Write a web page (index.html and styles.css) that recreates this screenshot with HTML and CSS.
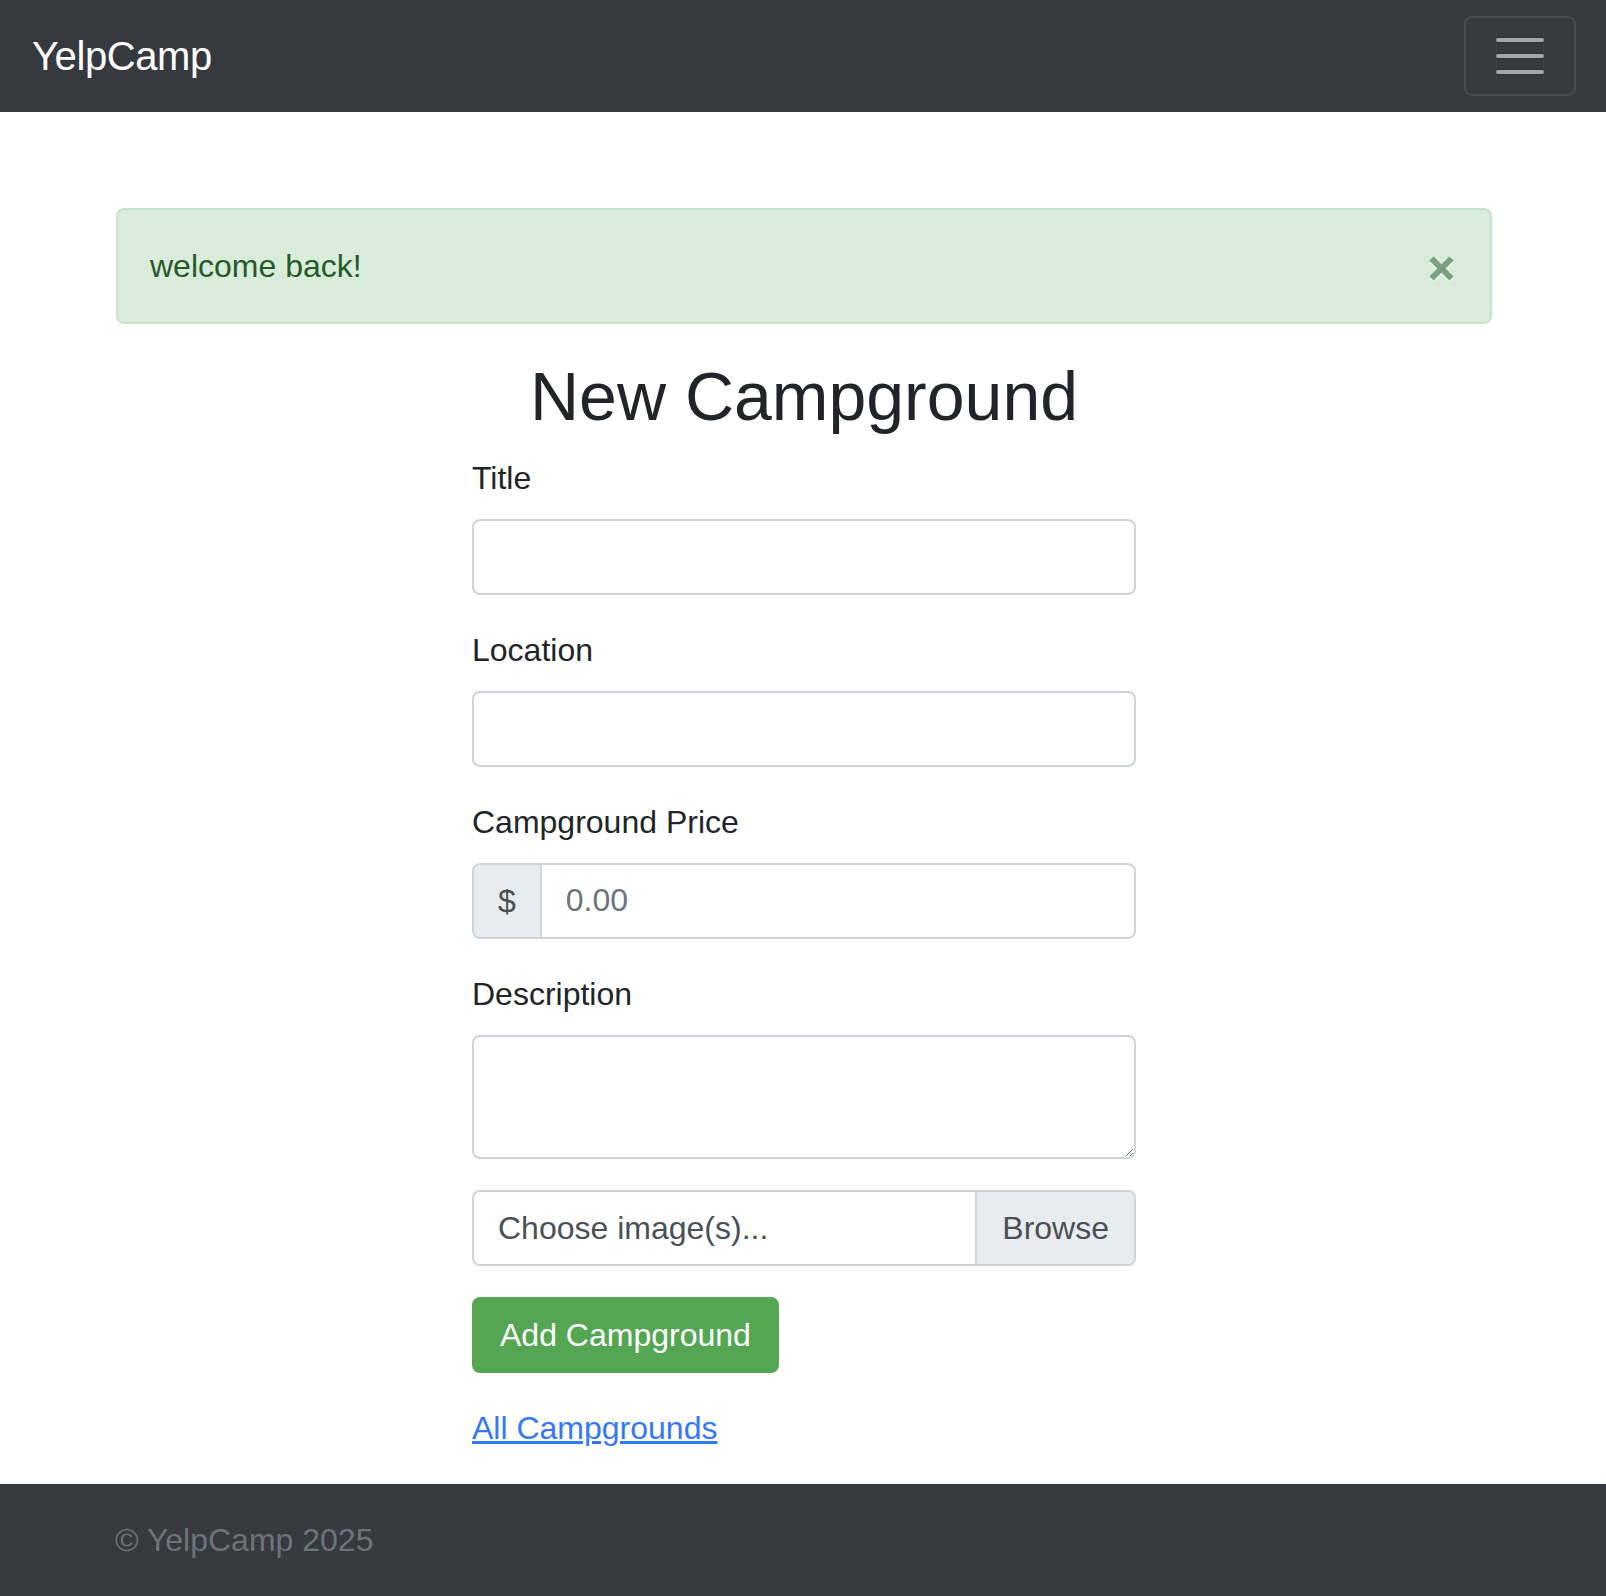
FILE: index.html
```html
<!DOCTYPE html>
<html lang="en">
<head>
<meta charset="utf-8">
<title>YelpCamp</title>
<link rel="stylesheet" href="styles.css">
</head>
<body class="page">
  <nav class="navbar">
    <a class="brand" href="#">YelpCamp</a>
    <button class="toggler" type="button" aria-label="Toggle navigation">
      <svg class="toggler-icon" width="60" height="60" viewBox="0 0 60 60" aria-hidden="true">
        <path d="M8 14h44M8 30h44M8 46h44" stroke="rgba(255,255,255,0.55)" stroke-width="4" stroke-linecap="round" fill="none"/>
      </svg>
    </button>
  </nav>

  <main class="container main">
    <div class="alert">
      welcome back!
      <button class="alert-close" type="button" aria-label="Close">
        <svg width="25" height="25" viewBox="0 0 25 25" aria-hidden="true">
          <path d="M2.5 2.5L22.5 22.5M22.5 2.5L2.5 22.5" stroke="#7ba080" stroke-width="6" fill="none"/>
        </svg>
      </button>
    </div>

    <div class="form-col">
      <h1 class="title">New Campground</h1>
      <form class="form">
        <div class="field">
          <label class="form-label" for="title">Title</label>
          <input class="form-control" type="text" id="title">
        </div>
        <div class="field">
          <label class="form-label" for="location">Location</label>
          <input class="form-control" type="text" id="location">
        </div>
        <div class="field">
          <label class="form-label" for="price">Campground Price</label>
          <div class="input-group">
            <span class="addon">$</span>
            <input class="form-control group-input" type="text" id="price" placeholder="0.00">
          </div>
        </div>
        <div class="field">
          <label class="form-label" for="description">Description</label>
          <textarea class="form-control textarea" id="description" rows="2"></textarea>
        </div>
        <div class="field">
          <div class="file-input">
            <span class="file-label">Choose image(s)...</span>
            <span class="file-browse">Browse</span>
          </div>
        </div>
        <div class="field">
          <button class="btn-success" type="button">Add Campground</button>
        </div>
      </form>
      <a class="back-link" href="#">All Campgrounds</a>
    </div>
  </main>

  <footer class="footer">
    <div class="container">
      <span class="footer-text">© YelpCamp 2025</span>
    </div>
  </footer>
</body>
</html>
```

FILE: styles.css
```css
* {
  box-sizing: border-box;
}

html, body {
  margin: 0;
  padding: 0;
}

.page {
  font-family: "Liberation Sans", Arial, Helvetica, sans-serif;
  font-size: 32px;
  line-height: 1.5;
  color: #212529;
  background: #fff;
  display: flex;
  flex-direction: column;
  min-height: 100vh;
}

/* Navbar */
.navbar {
  height: 112px;
  background: #363a3f;
  display: flex;
  align-items: center;
  justify-content: space-between;
  padding: 0 30px 0 32px;
  flex-shrink: 0;
}

.brand {
  color: #fff;
  font-size: 40px;
  line-height: 60px;
  letter-spacing: -0.4px;
  text-decoration: none;
  padding: 10px 0;
}

.toggler {
  width: 112px;
  height: 80px;
  padding: 0;
  background: transparent;
  border: 2px solid rgba(255, 255, 255, 0.1);
  border-radius: 8px;
  display: flex;
  align-items: center;
  justify-content: center;
}

.toggler-icon {
  display: block;
}

/* Layout */
.container {
  width: 1380px;
  margin: 0 auto;
}

.main {
  margin-top: 96px;
}

/* Alert */
.alert {
  position: relative;
  padding: 32px 80px 32px 32px;
  background: #d9ebdb;
  border: 2px solid #c6e3cc;
  border-radius: 8px;
  color: #265a29;
  line-height: 48px;
  margin: 0 0 32px 3px;
  width: 1376px;
}

.alert-close {
  position: absolute;
  top: 46px;
  right: 36px;
  width: 25px;
  height: 25px;
  padding: 0;
  border: 0;
  background: transparent;
  filter: drop-shadow(0 2px 0 rgba(255, 255, 255, 0.6));
}

.alert-close svg {
  display: block;
}

/* Form column */
.form-col {
  width: 664px;
  margin-left: 359px;
}

.title {
  font-size: 68px;
  font-weight: 500;
  line-height: 1.2;
  text-align: center;
  margin: 0 0 16px;
  color: #212529;
}

.form {
  margin: 0;
}

.field {
  margin-bottom: 31px;
}

.form-label {
  display: block;
  margin-bottom: 17px;
  line-height: 48px;
}

.form-control {
  display: block;
  width: 100%;
  height: 76px;
  padding: 12px 24px;
  font-family: inherit;
  font-size: 32px;
  line-height: 48px;
  color: #495057;
  background: #fff;
  border: 2px solid #ced4da;
  border-radius: 8px;
  outline: none;
}

.form-control::placeholder {
  color: #6c757d;
}

.textarea {
  height: 124px;
  resize: vertical;
}

.input-group {
  display: flex;
  align-items: stretch;
}

.addon {
  display: flex;
  align-items: center;
  padding: 0 24px;
  color: #495057;
  background: #e9ecef;
  border: 2px solid #ced4da;
  border-radius: 8px 0 0 8px;
}

.group-input {
  flex: 1;
  width: auto;
  border-left: none;
  border-radius: 0 8px 8px 0;
}

.file-input {
  display: flex;
  height: 76px;
  border: 2px solid #ced4da;
  border-radius: 8px;
  overflow: hidden;
  color: #495057;
  background: #fff;
}

.file-label {
  flex: 1;
  padding: 0 24px;
  line-height: 72px;
}

.file-browse {
  padding: 0 25px;
  line-height: 72px;
  background: #e9ecef;
  border-left: 2px solid #ced4da;
}

.btn-success {
  height: 76px;
  padding: 0 26px;
  font-family: inherit;
  font-size: 32px;
  line-height: 48px;
  color: #fff;
  background: #54a653;
  border: 2px solid #54a653;
  border-radius: 8px;
}

.back-link {
  color: #3478f6;
  text-decoration: underline;
  line-height: 48px;
}

/* Footer */
.footer {
  margin-top: auto;
  background: #363a3f;
  padding: 32px 0;
  line-height: 48px;
  flex-shrink: 0;
}

.footer-text {
  color: #6c737a;
  padding-left: 2px;
}
```
